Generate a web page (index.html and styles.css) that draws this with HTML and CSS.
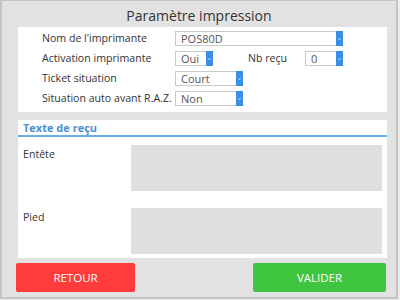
FILE: index.html
```html
<!DOCTYPE html>
<html lang="fr">
<head>
<meta charset="utf-8">
<title>Paramètre impression</title>
<link rel="stylesheet" href="styles.css">
</head>
<body>
<div class="frame">
  <h1 class="title">Paramètre impression</h1>

  <section class="panel settings">
    <span class="label">Nom de l'imprimante</span>
    <div class="field">
      <div class="select w-full"><span class="value">POS80D</span><span class="arrow"><svg width="7" height="15" viewBox="0 0 7 15"><path d="M2.5 7.5 L3.5 8.5 L4.5 7.5" fill="none" stroke="#fff" stroke-width="1"/></svg></span></div>
    </div>

    <span class="label">Activation imprimante</span>
    <div class="field">
      <div class="select w-small"><span class="value">Oui</span><span class="arrow"><svg width="7" height="15" viewBox="0 0 7 15"><path d="M2.5 7.5 L3.5 8.5 L4.5 7.5" fill="none" stroke="#fff" stroke-width="1"/></svg></span></div>
      <span class="label inline-label">Nb reçu</span>
      <div class="select w-small"><span class="value">0</span><span class="arrow"><svg width="7" height="15" viewBox="0 0 7 15"><path d="M2.5 7.5 L3.5 8.5 L4.5 7.5" fill="none" stroke="#fff" stroke-width="1"/></svg></span></div>
    </div>

    <span class="label">Ticket situation</span>
    <div class="field">
      <div class="select w-mid"><span class="value">Court</span><span class="arrow"><svg width="7" height="15" viewBox="0 0 7 15"><path d="M2.5 7.5 L3.5 8.5 L4.5 7.5" fill="none" stroke="#fff" stroke-width="1"/></svg></span></div>
    </div>

    <span class="label">Situation auto avant R.A.Z.</span>
    <div class="field">
      <div class="select w-mid"><span class="value">Non</span><span class="arrow"><svg width="7" height="15" viewBox="0 0 7 15"><path d="M2.5 7.5 L3.5 8.5 L4.5 7.5" fill="none" stroke="#fff" stroke-width="1"/></svg></span></div>
    </div>
  </section>

  <section class="panel receipt">
    <h2 class="section-head">Texte de reçu</h2>
    <div class="text-row">
      <span class="label row-label">Entête</span>
      <div class="textbox"></div>
    </div>
    <div class="text-row">
      <span class="label row-label">Pied</span>
      <div class="textbox"></div>
    </div>
  </section>

  <div class="actions">
    <button class="btn btn-retour">RETOUR</button>
    <button class="btn btn-valider">VALIDER</button>
  </div>
</div>
</body>
</html>
```

FILE: styles.css
```css
* { box-sizing: border-box; }

html, body {
  margin: 0;
  padding: 0;
  background: #ececec;
  font-family: "Open Sans", "Noto Sans", sans-serif;
  color: #333;
}

.frame {
  width: 398px;
  height: 299px;
  border-style: solid;
  border-color: #c4c4c4;
  border-width: 1px 2px 2px 2px;
  background: #e2e2e2;
  display: flex;
  flex-direction: column;
}

.title {
  margin: 0;
  height: 26px;
  padding-top: 4px;
  font-size: 14px;
  line-height: 21px;
  font-weight: normal;
  text-align: center;
  color: #333;
}

.panel {
  background: #fff;
  margin: 0 9px 0 16px;
}

.settings {
  height: 85px;
  padding: 4px 0 0 24px;
  display: grid;
  grid-template-columns: 133px auto;
  grid-auto-rows: 15px;
  row-gap: 5px;
  align-items: center;
}

.label {
  font-size: 10.6px;
  line-height: 15px;
  color: #333;
  white-space: nowrap;
}

.field {
  display: flex;
  align-items: center;
  height: 15px;
}

.select {
  display: flex;
  align-items: center;
  height: 15px;
  border: 1px solid #cacaca;
  background: #fff;
}

.w-full { width: 168px; }
.w-small { width: 38px; }
.w-mid { width: 68px; }

.value {
  padding-left: 5px;
  font-size: 11px;
  line-height: 13px;
  color: #555;
}

.arrow {
  margin: -1px -1px -1px auto;
  width: 7px;
  height: 15px;
  background: #3b8ee6;
  display: flex;
}

.inline-label {
  margin-left: 35px;
  width: 57px;
}

.receipt {
  margin-top: 8px;
  height: 138px;
  padding: 0 5px 4px 5px;
  display: flex;
  flex-direction: column;
}

.section-head {
  margin: 0 -5px;
  padding-left: 5px;
  height: 17px;
  font-size: 11px;
  line-height: 15px;
  font-weight: bold;
  color: #4a90d2;
  border-bottom: 2px solid #6cafe2;
}

.text-row {
  display: flex;
  margin-top: 8px;
  height: 46px;
}

.text-row + .text-row {
  margin-top: 17px;
}

.row-label {
  width: 108px;
  margin-top: 2px;
}

.textbox {
  flex: 1;
  background: #dfdfdf;
}

.actions {
  display: flex;
  justify-content: space-between;
  padding: 0 10px 0 14px;
  margin-top: 5px;
}

.btn {
  height: 29px;
  border: none;
  border-radius: 2px;
  font-family: "Open Sans", "Noto Sans", sans-serif;
  font-size: 11.5px;
  color: #fff;
  padding: 0;
}

.btn-retour {
  width: 119px;
  background: #ff3b3b;
}

.btn-valider {
  width: 133px;
  background: #3fc53f;
}
```
